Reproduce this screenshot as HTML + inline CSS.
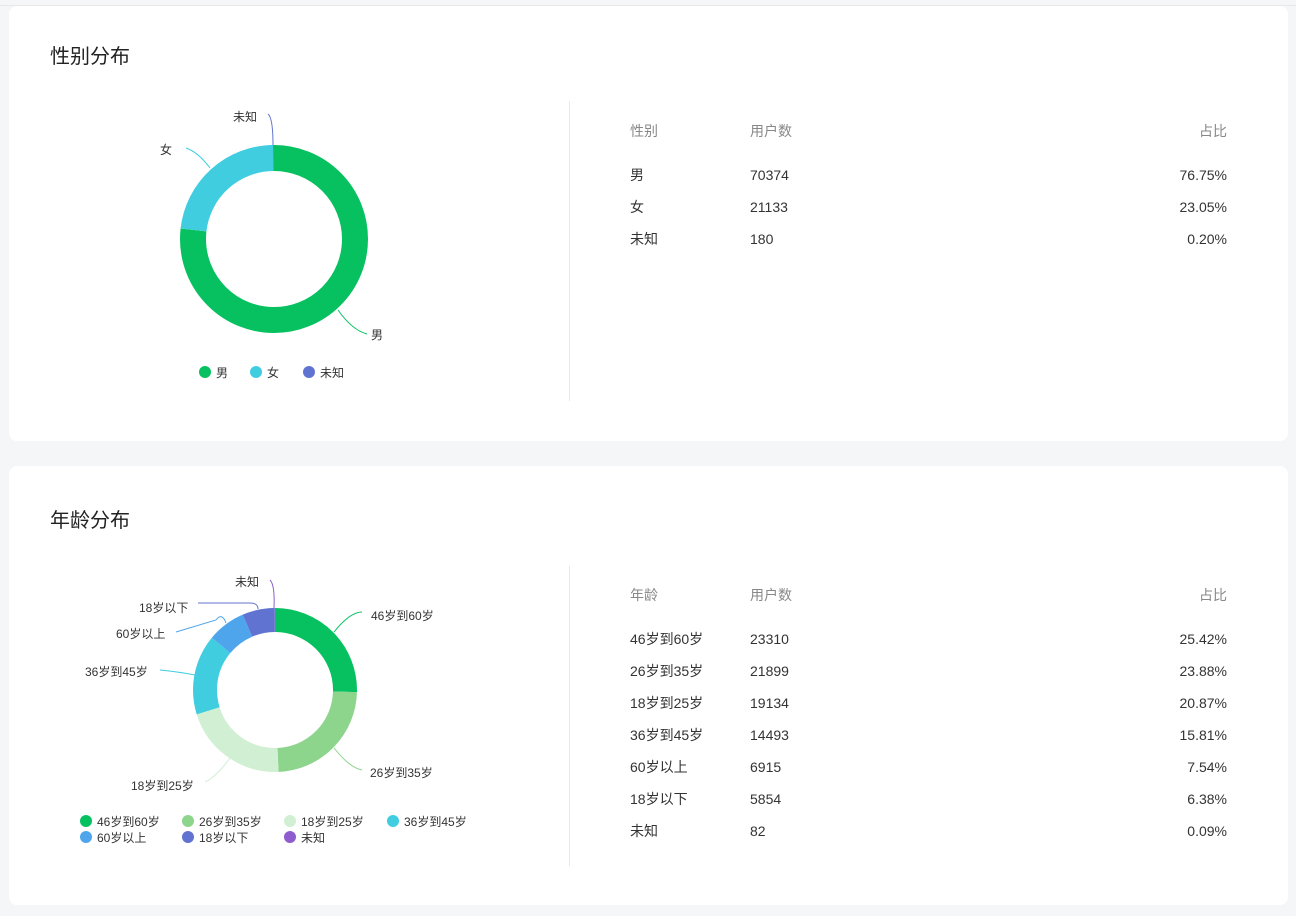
<!DOCTYPE html>
<html><head><meta charset="utf-8"><style>
body{margin:0;width:1296px;height:916px;background:#f5f6f8;font-family:"Liberation Sans","Noto Sans CJK SC",sans-serif;position:relative;overflow:hidden;color:#333}
.card{position:absolute;left:9px;width:1279px;background:#fff;border-radius:8px}
.t{position:absolute;left:41px;font-size:20px;color:#222}
.div{position:absolute;left:560px;width:1px;height:300px;background:#e8e8e8}
.tx{position:absolute;font-size:14px;line-height:16px;white-space:nowrap}
.h{color:#888}
svg text{font-family:"Liberation Sans","Noto Sans CJK SC",sans-serif;font-size:12px;fill:#333}
</style></head><body>
<div style="position:absolute;left:0;top:5px;width:1296px;height:1px;background:#e8e9eb"></div>
<div class="card" style="top:6px;height:435px">
<div class="t" style="top:34px">性别分布</div>
<div class="div" style="top:95px"></div>
</div>
<div class="card" style="top:466px;height:439px">
<div class="t" style="top:38px">年龄分布</div>
<div class="div" style="top:100px"></div>
</div>
<svg width="1296" height="916" style="position:absolute;left:0;top:0">
<g transform="translate(274,239) rotate(-90)" fill="none" stroke-width="26">
<circle r="81" stroke="#07c160" stroke-dasharray="390.6 1000"/>
<circle r="81" stroke="#40cde0" stroke-dasharray="0 390.6 117.3 1000"/>
<circle r="81" stroke="#6173d0" stroke-dasharray="0 507.9 1.2 1000"/>
</g>
<g stroke-width="1" fill="none">
<path d="M338 310 Q352 330 367 334" stroke="#07c160"/>
<path d="M210 168 Q198 152 186 148" stroke="#40cde0"/>
<path d="M273 145 Q273 118 268 114" stroke="#6173d0"/>
</g>
<text x="371" y="339">男</text><text x="160" y="154">女</text><text x="233" y="121">未知</text>
<circle cx="205" cy="372" r="6" fill="#07c160"/><text x="216" y="377" font-size="13">男</text>
<circle cx="256" cy="372" r="6" fill="#40cde0"/><text x="267" y="377">女</text>
<circle cx="309" cy="372" r="6" fill="#6173d0"/><text x="320" y="377">未知</text>
<g transform="translate(275,690) rotate(-90)" fill="none" stroke-width="24">
<circle r="70" stroke="#07c160" stroke-dasharray="111.8 1000"/>
<circle r="70" stroke="#8dd48c" stroke-dasharray="0 111.8 105 1000"/>
<circle r="70" stroke="#d1efd3" stroke-dasharray="0 216.8 91.8 1000"/>
<circle r="70" stroke="#40cde0" stroke-dasharray="0 308.6 69.5 1000"/>
<circle r="70" stroke="#4ea5ec" stroke-dasharray="0 378.1 33.2 1000"/>
<circle r="70" stroke="#6173d0" stroke-dasharray="0 411.3 28.1 1000"/>
<circle r="70" stroke="#8e5ccf" stroke-dasharray="0 439.4 0.5 1000"/>
</g>
<g stroke-width="1" fill="none">
<path d="M334 632 Q350 612 362 612" stroke="#07c160"/>
<path d="M334 748 Q350 768 362 770" stroke="#8dd48c"/>
<path d="M230 758 Q215 778 205 782" stroke="#d1efd3"/>
<path d="M195 675 Q180 672 160 670" stroke="#40cde0"/>
<path d="M226 623 Q222 612 216 620 L176 632" stroke="#4ea5ec"/>
<path d="M258 609 Q258 603 250 603 L198 603" stroke="#6173d0"/>
<path d="M274 608 Q275 585 270 580" stroke="#8e5ccf"/>
</g>
<text x="371" y="620">46岁到60岁</text><text x="370" y="777">26岁到35岁</text><text x="131" y="790">18岁到25岁</text>
<text x="85" y="676">36岁到45岁</text><text x="116" y="638">60岁以上</text><text x="139" y="612">18岁以下</text><text x="235" y="586">未知</text>
<circle cx="86" cy="821" r="6" fill="#07c160"/><text x="97" y="826">46岁到60岁</text>
<circle cx="188" cy="821" r="6" fill="#8dd48c"/><text x="199" y="826">26岁到35岁</text>
<circle cx="290" cy="821" r="6" fill="#d1efd3"/><text x="301" y="826">18岁到25岁</text>
<circle cx="393" cy="821" r="6" fill="#40cde0"/><text x="404" y="826">36岁到45岁</text>
<circle cx="86" cy="837" r="6" fill="#4ea5ec"/><text x="97" y="842">60岁以上</text>
<circle cx="188" cy="837" r="6" fill="#6173d0"/><text x="199" y="842">18岁以下</text>
<circle cx="290" cy="837" r="6" fill="#8e5ccf"/><text x="301" y="842">未知</text>
</svg>
<div class="tx h" style="left:630px;top:123px">性别</div><div class="tx h" style="left:750px;top:123px">用户数</div><div class="tx h" style="right:69px;top:123px">占比</div>
<div class="tx" style="left:630px;top:167px">男</div><div class="tx" style="left:750px;top:167px">70374</div><div class="tx" style="right:69px;top:167px">76.75%</div>
<div class="tx" style="left:630px;top:199px">女</div><div class="tx" style="left:750px;top:199px">21133</div><div class="tx" style="right:69px;top:199px">23.05%</div>
<div class="tx" style="left:630px;top:231px">未知</div><div class="tx" style="left:750px;top:231px">180</div><div class="tx" style="right:69px;top:231px">0.20%</div>
<div class="tx h" style="left:630px;top:587px">年龄</div><div class="tx h" style="left:750px;top:587px">用户数</div><div class="tx h" style="right:69px;top:587px">占比</div>
<div class="tx" style="left:630px;top:631px">46岁到60岁</div><div class="tx" style="left:750px;top:631px">23310</div><div class="tx" style="right:69px;top:631px">25.42%</div>
<div class="tx" style="left:630px;top:663px">26岁到35岁</div><div class="tx" style="left:750px;top:663px">21899</div><div class="tx" style="right:69px;top:663px">23.88%</div>
<div class="tx" style="left:630px;top:695px">18岁到25岁</div><div class="tx" style="left:750px;top:695px">19134</div><div class="tx" style="right:69px;top:695px">20.87%</div>
<div class="tx" style="left:630px;top:727px">36岁到45岁</div><div class="tx" style="left:750px;top:727px">14493</div><div class="tx" style="right:69px;top:727px">15.81%</div>
<div class="tx" style="left:630px;top:759px">60岁以上</div><div class="tx" style="left:750px;top:759px">6915</div><div class="tx" style="right:69px;top:759px">7.54%</div>
<div class="tx" style="left:630px;top:791px">18岁以下</div><div class="tx" style="left:750px;top:791px">5854</div><div class="tx" style="right:69px;top:791px">6.38%</div>
<div class="tx" style="left:630px;top:823px">未知</div><div class="tx" style="left:750px;top:823px">82</div><div class="tx" style="right:69px;top:823px">0.09%</div>
</body></html>
